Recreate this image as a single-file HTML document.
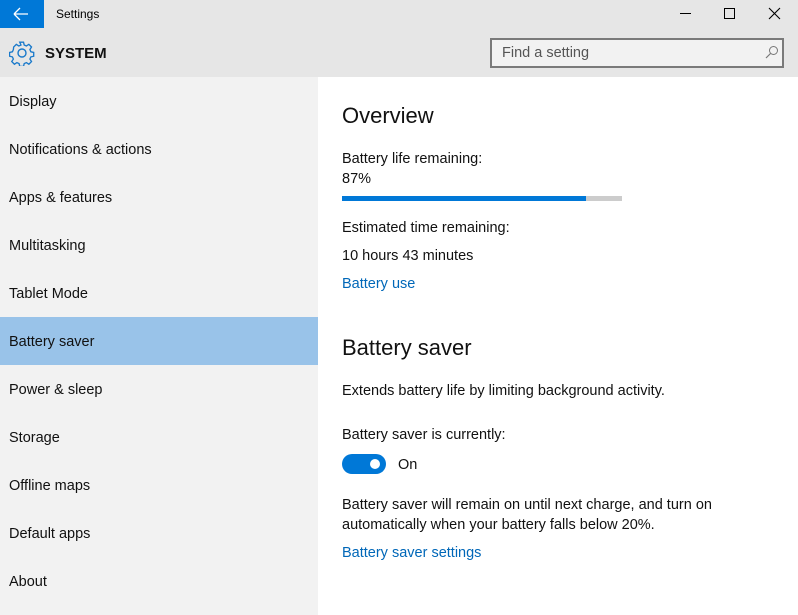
<!DOCTYPE html><html><head><style>
body{margin:0;width:798px;height:615px;position:relative;overflow:hidden;font-family:"Liberation Sans",sans-serif;background:#fff;color:#000}
.a{position:absolute;white-space:nowrap}
.hdr{position:absolute;left:0;top:0;width:798px;height:77px;background:#e6e6e6}
.side{position:absolute;left:0;top:77px;width:318px;height:538px;background:#f2f2f2}
.item{position:absolute;left:0;width:318px;height:48px;line-height:50px;font-size:14.5px;padding-left:9px;box-sizing:border-box;color:#111}
.t{font-size:14.5px;color:#111}
.link{color:#0067b8;font-size:14.5px}
</style></head><body>
<div class="hdr"></div>
<div class="a" style="left:0;top:0;width:44px;height:28px;background:#0078d7"></div>
<svg class="a" style="left:12px;top:6px" width="18" height="16"><path d="M2 8H16M2 8L8 2M2 8L8 14" stroke="#fff" stroke-width="1.3" fill="none"/></svg>
<div class="a" style="left:56px;top:7px;font-size:12px">Settings</div>
<svg class="a" style="left:680px;top:6px" width="110" height="16"><path d="M0 7.5H11" stroke="#000" stroke-width="1"/><path d="M44.5 2.5h10v10h-10z" stroke="#000" fill="none"/><path d="M89 2L100 13M100 2L89 13" stroke="#000" stroke-width="1.1"/></svg>
<svg class="a" style="left:9px;top:40px" width="26" height="26" viewBox="0 0 26 26"><g fill="none" stroke="#1979ca" stroke-width="1.4"><circle cx="13" cy="13" r="4"/><path d="M11 2h4l.7 3 2.3 1 2.6-1.7 2.8 2.8L21.7 9.8l1 2.3 3 .7v4l-3 .7-1 2.3 1.7 2.6-2.8 2.8-2.6-1.7-2.3 1-.7 3h-4l-.7-3-2.3-1-2.6 1.7-2.8-2.8 1.7-2.6-1-2.3-3-.7v-4l3-.7 1-2.3L4.6 7.1l2.8-2.8L10 6l2.3-1z" transform="scale(.95) translate(.3 .3)"/></g></svg>
<div class="a" style="left:45px;top:45px;font-size:15px;font-weight:bold;color:#111">SYSTEM</div>
<div class="a" style="left:490px;top:38px;width:294px;height:30px;border:2px solid #7a7a7a;box-sizing:border-box;background:#f2f2f2"></div>
<div class="a" style="left:502px;top:45px;font-size:14.5px;color:#555">Find a setting</div>
<svg class="a" style="left:765px;top:45px" width="14" height="14"><circle cx="8.5" cy="5.5" r="4" stroke="#777" fill="none"/><path d="M5.5 8.5L1 13" stroke="#777" stroke-width="1.2"/></svg>
<div class="side"></div>
<div class="item" style="top:77px">Display</div>
<div class="item" style="top:125px">Notifications &amp; actions</div>
<div class="item" style="top:173px">Apps &amp; features</div>
<div class="item" style="top:221px">Multitasking</div>
<div class="item" style="top:269px">Tablet Mode</div>
<div class="item" style="top:317px;background:#99c3e9">Battery saver</div>
<div class="item" style="top:365px">Power &amp; sleep</div>
<div class="item" style="top:413px">Storage</div>
<div class="item" style="top:461px">Offline maps</div>
<div class="item" style="top:509px">Default apps</div>
<div class="item" style="top:557px">About</div>
<div class="a" style="left:342px;top:103px;font-size:22px;color:#111">Overview</div>
<div class="a t" style="left:342px;top:151px">Battery life remaining:</div>
<div class="a t" style="left:342px;top:171px">87%</div>
<div class="a" style="left:342px;top:196px;width:280px;height:5px;background:#ccc"><div style="width:244px;height:5px;background:#0078d7"></div></div>
<div class="a t" style="left:342px;top:220px">Estimated time remaining:</div>
<div class="a t" style="left:342px;top:248px">10 hours 43 minutes</div>
<div class="a link" style="left:342px;top:276px">Battery use</div>
<div class="a" style="left:342px;top:335px;font-size:22px;color:#111">Battery saver</div>
<div class="a t" style="left:342px;top:383px">Extends battery life by limiting background activity.</div>
<div class="a t" style="left:342px;top:427px">Battery saver is currently:</div>
<div class="a" style="left:342px;top:454px;width:44px;height:20px;border-radius:10px;background:#0078d7"></div>
<div class="a" style="left:370px;top:459px;width:10px;height:10px;border-radius:5px;background:#fff"></div>
<div class="a t" style="left:398px;top:457px">On</div>
<div class="a t" style="left:342px;top:497px">Battery saver will remain on until next charge, and turn on</div>
<div class="a t" style="left:342px;top:517px">automatically when your battery falls below 20%.</div>
<div class="a link" style="left:342px;top:545px">Battery saver settings</div>
</body></html>
